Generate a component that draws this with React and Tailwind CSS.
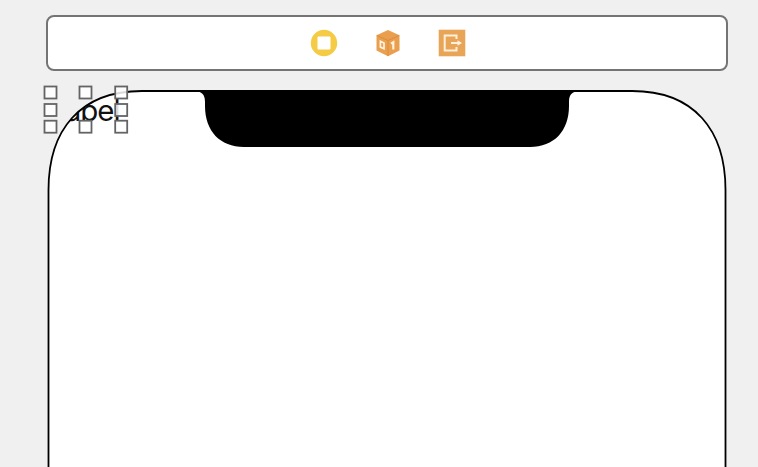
const handles = [
  [50.5, 92.5], [85.5, 92.5], [121.2, 92.5],
  [50.5, 110], [121.2, 110],
  [50.5, 126.7], [85.5, 126.7], [121.2, 126.7],
];

function SceneDock() {
  return (
    <header className="ml-[46px] mt-[15px] flex h-14 w-[682px] shrink-0 items-center justify-center gap-[37px] rounded-[8px] border-2 border-[#747474] bg-white pl-[2px]">
      <svg className="h-7 w-7" viewBox="0 0 28 28" aria-label="View controller">
        <circle cx="14" cy="14" r="13.2" fill="#f5cb45" />
        <rect x="7.5" y="7.5" width="13" height="13" rx="1" fill="#fff" />
      </svg>
      <svg className="h-7 w-[26px]" viewBox="0 0 26 28" aria-label="First responder">
        <path d="M13 1 24.5 6.2v15.3L13 27.3 1.5 21.5V6.2Z" fill="#e99f4e" />
        <path d="m1.8 6.5 11.2 5 11.2-5M13 11.5V27" fill="none" stroke="#dc8c3a" strokeWidth="1" />
        <path d="m5.4 12.4 3.6 1.6v5.7l-3.6-1.6Z" fill="none" stroke="#fff2df" strokeWidth="1.7" />
        <path d="m16 14.7 2.3-1.5v7.2" fill="none" stroke="#fff2df" strokeWidth="2.2" />
      </svg>
      <svg className="h-7 w-7" viewBox="0 0 28 28" aria-label="Exit">
        <path d="M.7.7h26.6v26.6H.7Z" fill="#e9a557" />
        <path d="M18.5 10V6.5H6.7v15h11.8V18M13 14H20" fill="none" stroke="#fff0dc" strokeWidth="2" />
        <path d="m19.5 11.2 4.5 2.8-4.5 2.8Z" fill="#fff0dc" />
      </svg>
    </header>
  );
}

function Device() {
  return (
    <main className="ml-[40px] mt-[9px] h-[387px] w-[690px] shrink-0">
      <svg className="block h-full w-full" viewBox="40 80 690 387">
        <defs>
          <clipPath id="screen">
            <path d="M48.5 470V190C48.5 130 80 91 142 91H632C694 91 725.5 130 725.5 190V470Z" />
          </clipPath>
        </defs>
        <path d="M48.5 470V190C48.5 130 80 91 142 91H632C694 91 725.5 130 725.5 190V470Z" fill="#fff" />
        <text x="49" y="121.3" clipPath="url(#screen)" fill="#111" fontSize="29.5" letterSpacing="-1" fontFamily="Inter, sans-serif">Label</text>
        <path d="M48.5 470V190C48.5 130 80 91 142 91H632C694 91 725.5 130 725.5 190V470" fill="none" stroke="#000" strokeWidth="1.8" />
        <path d="M191 91C202 91 205 94 205 102V106C205 131 220 147 244 147H530C554 147 569 131 569 106V102C569 94 572 91 583 91Z" fill="#000" />
        {handles.map(([x, y]) => (
          <rect key={`${x}-${y}`} x={x - 6} y={y - 6} width="12" height="12" fill="#fff" fillOpacity="0.85" stroke="#646464" strokeWidth="1.8" />
        ))}
      </svg>
    </main>
  );
}

export default function App() {
  return (
    <div className="flex h-[467px] w-[758px] flex-col overflow-hidden bg-[#f0f0f0]">
      <SceneDock />
      <Device />
    </div>
  );
}
